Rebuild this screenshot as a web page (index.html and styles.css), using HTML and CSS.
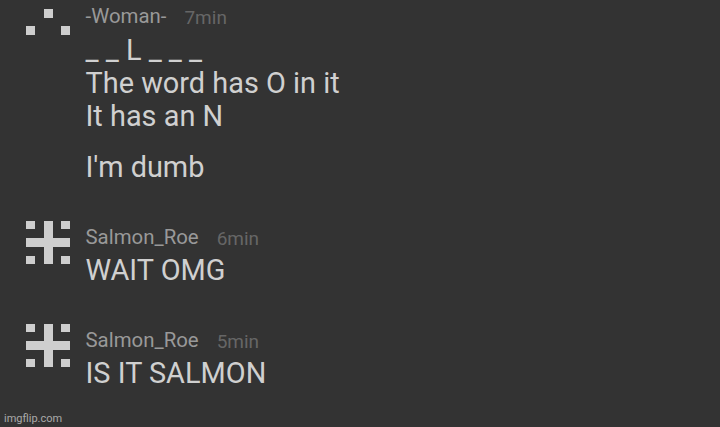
FILE: index.html
```html
<!DOCTYPE html>
<html lang="en">
<head>
    <meta charset="UTF-8">
    <meta name="viewport" content="width=device-width, initial-scale=1.0">
    <title>Chat</title>
    <link rel="stylesheet" href="styles.css">
</head>
<body>
    <div class="chat">
        <div class="message first">
            <svg class="avatar" viewBox="0 0 44 44">
                <path d="M18 1h9v9h-9zM0 18h9v9H0zM35 18h9v9h-9z"/>
            </svg>
            <div class="content">
                <div class="meta"><span class="name">-Woman-</span><span class="time">7min</span></div>
                <p>_ _ L _ _ _<br>The word has O in it<br>It has an N</p>
                <p>I'm dumb</p>
            </div>
        </div>

        <div class="message second">
            <svg class="avatar" viewBox="0 0 44 44">
                <path d="M0 0h9v8H0zM35 0h9v8h-9zM0 35h9v8H0zM35 35h9v8h-9zM18 0h9v43h-9zM0 17h44v9H0z"/>
            </svg>
            <div class="content">
                <div class="meta"><span class="name">Salmon_Roe</span><span class="time">6min</span></div>
                <p>WAIT OMG</p>
            </div>
        </div>

        <div class="message third">
            <svg class="avatar" viewBox="0 0 44 44">
                <path d="M0 0h9v8H0zM35 0h9v8h-9zM0 35h9v8H0zM35 35h9v8h-9zM18 0h9v43h-9zM0 17h44v9H0z"/>
            </svg>
            <div class="content">
                <div class="meta"><span class="name">Salmon_Roe</span><span class="time">5min</span></div>
                <p>IS IT SALMON</p>
            </div>
        </div>
    </div>
    <div class="watermark">imgflip.com</div>
</body>
</html>
```

FILE: styles.css
```css
body {
    margin: 0;
    height: 427px;
    overflow: hidden;
    background: #333;
    color: #d0d0d0;
    font-family: Roboto, sans-serif;
}

.chat {
    padding-left: 26px;
}

.message {
    display: flex;
    gap: 15.5px;
}

.first {
    height: 213px;
    padding-top: 8px;
}

.second {
    height: 103px;
}

.third {
    height: 88px;
}

.avatar {
    width: 44px;
    height: 44px;
    fill: #cecece;
    flex: none;
}

.content {
    margin-top: 4px;
}

.first .content {
    margin-top: -4px;
}

.meta {
    display: flex;
    gap: 18px;
    height: 29px;
    line-height: 24px;
}

.first .meta {
    height: 30px;
}

.name {
    font-size: 20.4px;
    color: #999;
}

.time {
    padding-top: 2px;
    font-size: 19px;
    color: #666;
}

p {
    margin: 0 0 18px;
    font-size: 28.9px;
    line-height: 33px;
}

.watermark {
    padding-left: 4px;
    font-size: 11px;
    line-height: 14px;
    color: #aaa;
}
```
